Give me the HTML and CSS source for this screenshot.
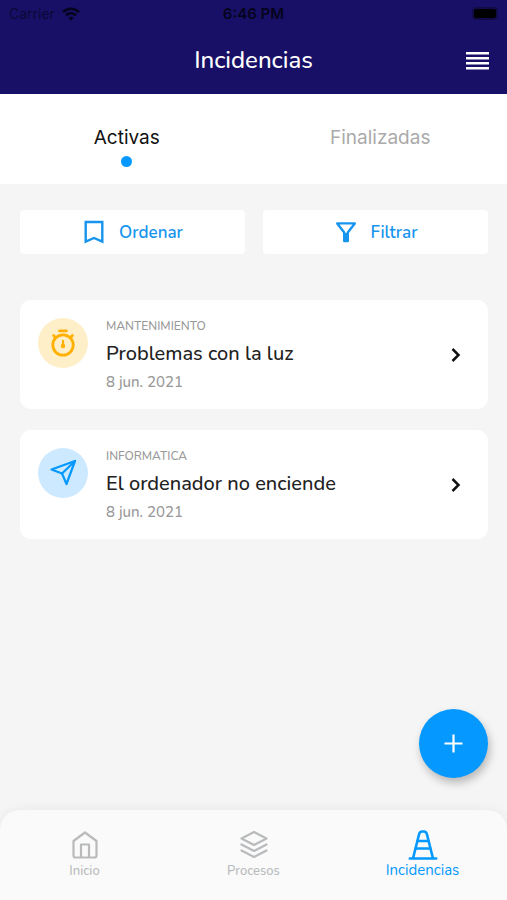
FILE: index.html
```html
<!DOCTYPE html>
<html lang="es">
<head>
    <meta charset="UTF-8">
    <meta name="viewport" content="width=device-width, initial-scale=1.0">
    <title>Incidencias</title>
    <link rel="stylesheet" href="styles.css">
</head>
<body>
    <header class="header">
        <div class="status-bar">
            <div class="carrier">
                <span>Carrier</span>
                <svg width="18" height="14" viewBox="0 0 18 14" fill="none" stroke="currentColor" stroke-width="2.6">
                    <path d="M1 5.2C5.5.6 12.500.6 17 5.200"/>
                    <path d="M4 8.400C6.800 5.600 11.200 5.600 14 8.400"/>
                    <path d="M9 13.500 6.300 10.800C7.800 9.300 10.200 9.300 11.700 10.800Z" fill="currentColor" stroke="none"/>
                </svg>
            </div>
            <span class="clock">6:46 PM</span>
            <div class="battery"><span class="battery-level"></span></div>
        </div>
        <div class="title-bar">
            <h1>Incidencias</h1>
            <button class="menu-btn" aria-label="Menú">
                <svg width="23" height="18" viewBox="0 0 23 18" fill="currentColor">
                    <path d="M0 0h23v2.600H0zM0 5h23v2.600H0zM0 10h23v2.600H0zM0 15h23v2.600H0z"/>
                </svg>
            </button>
        </div>
    </header>

    <nav class="tabs">
        <a href="#activas" class="tab active">Activas</a>
        <a href="#finalizadas" class="tab">Finalizadas</a>
    </nav>

    <main class="content">
        <div class="actions">
            <button class="action-btn">
                <svg width="24" height="24" viewBox="0 0 24 24" fill="none" stroke="currentColor" stroke-width="2.400">
                    <path d="M3.700 2h16.600v19.600l-8.300-3.600-8.300 3.600z"/>
                </svg>
                <span>Ordenar</span>
            </button>
            <button class="action-btn">
                <svg width="24" height="24" viewBox="0 0 24 24" fill="none" stroke="currentColor" stroke-width="2.400" stroke-linejoin="round">
                    <path d="M3.200 3.400h17.600L13.800 12.500v8.500h-3.600v-8.500z"/>
                    <path d="M12 13v8"/>
                </svg>
                <span>Filtrar</span>
            </button>
        </div>

        <div class="list">
            <a href="#mantenimiento" class="card">
                <span class="card-icon orange">
                    <svg width="28" height="30" viewBox="0 0 28 30" fill="none" stroke="currentColor" stroke-width="2.800" stroke-linecap="round">
                        <circle cx="14" cy="17" r="10.200"/>
                        <path d="M10.500 2.800h7M4.600 7.600 6.500 9.500M23.400 7.600 21.500 9.500"/>
                        <path d="M14 12.800v5" stroke-width="2.200"/>
                        <circle cx="14" cy="18" r="2.200" fill="currentColor" stroke="none"/>
                    </svg>
                </span>
                <span class="card-text">
                    <span class="category">MANTENIMIENTO</span>
                    <span class="name">Problemas con la luz</span>
                    <span class="date">8 jun. 2021</span>
                </span>
                <svg class="chevron" width="12" height="16" viewBox="0 0 12 16" fill="none" stroke="currentColor" stroke-width="2.500">
                    <path d="M2.500 2 8.500 8l-6 6"/>
                </svg>
            </a>
            <a href="#informatica" class="card">
                <span class="card-icon blue">
                    <svg width="28" height="28" viewBox="0 0 28 28" fill="none" stroke="currentColor" stroke-width="2.200" stroke-linejoin="round" stroke-linecap="round">
                        <path d="M26 2 2.500 10.500 13 14.500 17.500 25z"/>
                        <path d="M26 2 13 14.500"/>
                    </svg>
                </span>
                <span class="card-text">
                    <span class="category">INFORMATICA</span>
                    <span class="name">El ordenador no enciende</span>
                    <span class="date">8 jun. 2021</span>
                </span>
                <svg class="chevron" width="12" height="16" viewBox="0 0 12 16" fill="none" stroke="currentColor" stroke-width="2.500">
                    <path d="M2.500 2 8.500 8l-6 6"/>
                </svg>
            </a>
        </div>

        <button class="add-btn" aria-label="Añadir incidencia">
            <svg width="19" height="19" viewBox="0 0 19 19" fill="none" stroke="currentColor" stroke-width="2.200">
                <path d="M9.500.5v18M.5 9.500h18"/>
            </svg>
        </button>
    </main>

    <nav class="bottom-nav">
        <a href="#inicio" class="nav-item">
            <svg width="30" height="30" viewBox="0 0 30 30" fill="none" stroke="currentColor" stroke-width="2.200" stroke-linejoin="round">
                <path d="M3.500 11 15 2.500 26.500 11v14.500a2 2 0 0 1-2 2h-19a2 2 0 0 1-2-2z"/>
                <path d="M11 27.500v-13h8v13"/>
            </svg>
            <span>Inicio</span>
        </a>
        <a href="#procesos" class="nav-item">
            <svg width="30" height="30" viewBox="0 0 30 30" fill="none" stroke="currentColor" stroke-width="2.200" stroke-linejoin="round" stroke-linecap="round">
                <path d="M15 2 27.500 8.500 15 15 2.500 8.500z"/>
                <path d="M2.500 14.500 15 21 27.500 14.500M2.500 20.500 15 27 27.500 20.500"/>
            </svg>
            <span>Procesos</span>
        </a>
        <a href="#incidencias" class="nav-item active">
            <svg width="30" height="30" viewBox="0 0 30 30" fill="none" stroke="currentColor" stroke-width="2.600" stroke-linejoin="round" stroke-linecap="round">
                <path d="M1.800 28.500h26.400M5 28.500 11 4.500c.5-2 1.500-3 3-3h2c1.500 0 2.500 1 3 3l6 24"/>
                <path d="M9.500 11h11M7.700 18.500h14.600"/>
            </svg>
            <span>Incidencias</span>
        </a>
    </nav>
</body>
</html>
```

FILE: styles.css
```css
* {
    box-sizing: border-box;
}
body {
    font-family: "Nunito", "Noto Sans", sans-serif;
    margin: 0;
    min-height: 100vh;
    display: flex;
    flex-direction: column;
    background-color: #f5f5f5;
    color: #222;
}
button {
    font-family: inherit;
    border: none;
    padding: 0;
    cursor: pointer;
}
a {
    text-decoration: none;
}
svg {
    display: block;
}
.header {
    background-color: #181066;
}
.status-bar {
    display: grid;
    grid-template-columns: 1fr auto 1fr;
    align-items: center;
    height: 27px;
    padding: 0 9px;
    font-family: "Inter", sans-serif;
    font-size: 14px;
    color: #05041c;
}
.carrier {
    display: flex;
    align-items: center;
    gap: 7px;
    color: #0b0838;
}
.carrier svg {
    color: #05041c;
}
.clock {
    font-size: 15px;
    font-weight: 600;
}
.battery {
    justify-self: end;
    padding: 2px;
    border-radius: 4px;
    background-color: #110b4a;
}
.battery-level {
    display: block;
    width: 22px;
    height: 9px;
    border-radius: 2px;
    background-color: #000;
}
.title-bar {
    display: grid;
    grid-template-columns: 1fr auto 1fr;
    align-items: center;
    height: 67px;
    padding: 0 18px;
    color: #fff;
}
h1 {
    grid-column: 2;
    margin: 0;
    padding-bottom: 2px;
    font-size: 24px;
    font-weight: 500;
}
.menu-btn {
    justify-self: end;
    background: none;
    color: #fff;
}
.tabs {
    display: flex;
    height: 90px;
    background-color: #fff;
    font-family: "Inter", sans-serif;
}
.tab {
    flex: 1;
    display: flex;
    flex-direction: column;
    align-items: center;
    gap: 6px;
    padding-top: 32px;
    font-size: 19px;
    line-height: 24px;
    color: #aaa;
}
.tab.active {
    color: #111;
}
.tab.active::after {
    content: "";
    width: 11px;
    height: 11px;
    border-radius: 50%;
    background-color: #0599ff;
}
.content {
    position: relative;
    flex: 1;
    padding: 26px 19px 32px 20px;
}
.actions {
    display: flex;
    gap: 18px;
    margin-bottom: 46px;
}
.action-btn {
    flex: 1;
    display: flex;
    align-items: center;
    justify-content: center;
    gap: 13px;
    height: 44px;
    border-radius: 4px;
    background-color: #fff;
    color: #1795ee;
    font-size: 17px;
    font-weight: 600;
}
.list {
    display: flex;
    flex-direction: column;
    gap: 21px;
}
.card {
    display: flex;
    align-items: center;
    gap: 18px;
    height: 109px;
    padding: 0 26px 0 18px;
    border-radius: 11px;
    background-color: #fff;
    color: #222;
}
.card-icon {
    display: flex;
    align-items: center;
    justify-content: center;
    align-self: flex-start;
    width: 50px;
    height: 50px;
    margin-top: 18px;
    border-radius: 50%;
}
.card-icon.orange {
    background-color: #ffefc8;
    color: #ffb000;
}
.card-icon.blue {
    background-color: #cce9ff;
    color: #0599ff;
}
.card-text {
    flex: 1;
    display: flex;
    flex-direction: column;
    padding-bottom: 2px;
    line-height: 28px;
}
.category {
    font-size: 12px;
    font-weight: 500;
    color: #999;
}
.name {
    font-size: 20px;
    font-weight: 500;
}
.date {
    font-size: 15px;
    font-weight: 500;
    color: #999;
}
.chevron {
    color: #111;
}
.add-btn {
    position: absolute;
    right: 19px;
    bottom: 32px;
    display: flex;
    align-items: center;
    justify-content: center;
    width: 69px;
    height: 69px;
    border-radius: 50%;
    background-color: #0599ff;
    color: #fff;
    box-shadow: 2px 5px 9px rgba(0, 0, 0, 0.25);
}
.bottom-nav {
    display: flex;
    height: 90px;
    border-radius: 20px 20px 0 0;
    background-color: #fafafa;
    box-shadow: 0 0 12px rgba(0, 0, 0, 0.06);
}
.nav-item {
    flex: 1;
    display: flex;
    flex-direction: column;
    align-items: center;
    padding-top: 20px;
    font-size: 13px;
    font-weight: 500;
    line-height: 22px;
    color: #b8babc;
}
.nav-item.active {
    font-size: 15px;
    font-weight: 400;
    line-height: 20px;
    color: #0599ff;
}
```
